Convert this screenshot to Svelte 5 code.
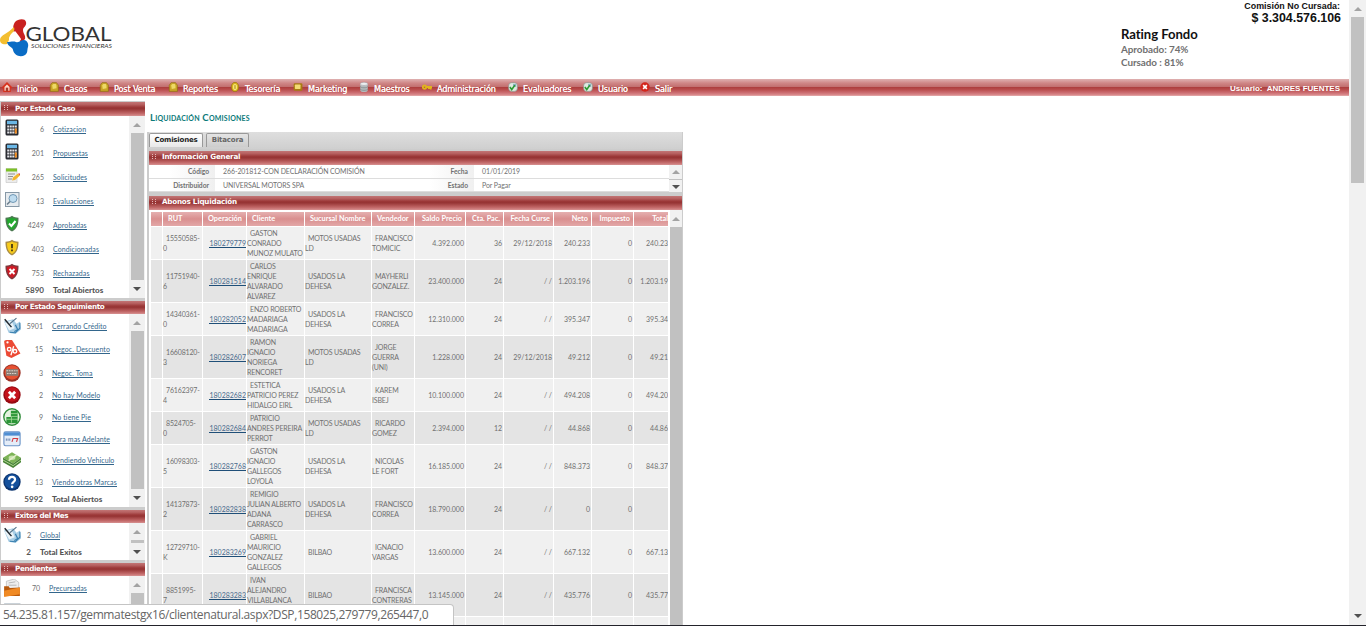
<script>
  const menu = [
    { t: 'Inicio', w: 47, i: 'home' },
    { t: 'Casos', w: 50, i: 'tag' },
    { t: 'Post Venta', w: 69, i: 'tag' },
    { t: 'Reportes', w: 62, i: 'tag' },
    { t: 'Tesorería', w: 63, i: 'coin' },
    { t: 'Marketing', w: 66, i: 'card' },
    { t: 'Maestros', w: 63, i: 'db' },
    { t: 'Administración', w: 86, i: 'key' },
    { t: 'Evaluadores', w: 75, i: 'check' },
    { t: 'Usuario', w: 57, i: 'check' },
    { t: 'Salir', w: 40, i: 'exit' },
  ];
  const panels = [
    {
      title: 'Por Estado Caso', h: 182, n: 43, thumb: 147, total: ['5890', 'Total Abiertos', 14], cls: 'caso',
      rows: [
        ['calc', '6', 'Cotizacion', 24], ['calc', '201', 'Propuestas', 24], ['note', '265', 'Solicitudes', 24],
        ['lens', '13', 'Evaluaciones', 24], ['ok', '4249', 'Aprobadas', 24], ['warn', '403', 'Condicionadas', 24],
        ['bad', '753', 'Rechazadas', 24],
      ],
    },
    {
      title: 'Por Estado Seguimiento', h: 193, n: 42, thumb: 158, total: ['5992', 'Total Abiertos', 14], cls: 'seg',
      rows: [
        ['pen', '5901', 'Cerrando Crédito', 23], ['pct', '15', 'Negoc. Descuento', 24], ['sign', '3', 'Negoc. Toma', 24],
        ['cross', '2', 'No hay Modelo', 20], ['green', '9', 'No tiene Pie', 23], ['cal', '42', 'Para mas Adelante', 21],
        ['money', '7', 'Vendiendo Vehiculo', 22], ['help', '13', 'Viendo otras Marcas', 22],
      ],
    },
    {
      title: 'Exitos del Mes', h: 37, n: 30, thumb: 3, total: ['2', 'Total Exitos', 14], cls: 'seg',
      rows: [['pen', '2', 'Global', 23]],
    },
    {
      title: 'Pendientes', h: 60, n: 39, thumb: 40, total: null, cls: 'seg',
      rows: [['folder', '70', 'Precursadas', 24], ['lens', '', '', 24]],
    },
  ];
  const heads = ['', 'RUT', 'Operación', 'Cliente', 'Sucursal Nombre', 'Vendedor', 'Saldo Precio', 'Cta. Pac.', 'Fecha Curse', 'Neto', 'Impuesto', 'Total'];
  const U = ['USADOS LA', 'DEHESA'];
  const M = ['MOTOS USADAS', 'LD'];
  const rows = [
    [33, ['15550585-', '0'], '180279779', ['GASTON', 'CONRADO', 'MUNOZ MULATO'], M, ['FRANCISCO', 'TOMICIC'], '4.392.000', '36', '29/12/2018', '240.233', '240.23'],
    [43, ['11751940-', '6'], '180281514', ['CARLOS', 'ENRIQUE', 'ALVARADO', 'ALVAREZ'], U, ['MAYHERLI', 'GONZALEZ.'], '23.400.000', '24', '/ /', '1.203.196', '1.203.19'],
    [33, ['14340361-', '0'], '180282052', ['ENZO ROBERTO', 'MADARIAGA', 'MADARIAGA'], U, ['FRANCISCO', 'CORREA'], '12.310.000', '24', '/ /', '395.347', '395.34'],
    [43, ['16608120-', '3'], '180282607', ['RAMON', 'IGNACIO', 'NORIEGA', 'RENCORET'], M, ['JORGE', 'GUERRA', '(UNI)'], '1.228.000', '24', '29/12/2018', '49.212', '49.21'],
    [33, ['76162397-', '4'], '180282682', ['ESTETICA', 'PATRICIO PEREZ', 'HIDALGO EIRL'], U, ['KAREM', 'ISBEJ'], '10.100.000', '24', '/ /', '494.208', '494.20'],
    [33, ['8524705-', '0'], '180282684', ['PATRICIO', 'ANDRES PEREIRA', 'PERROT'], M, ['RICARDO', 'GOMEZ'], '2.394.000', '12', '/ /', '44.868', '44.86'],
    [43, ['16098303-', '5'], '180282768', ['GASTON', 'IGNACIO', 'GALLEGOS', 'LOYOLA'], U, ['NICOLAS', 'LE FORT'], '16.185.000', '24', '/ /', '848.373', '848.37'],
    [43, ['14137873-', '2'], '180282838', ['REMIGIO', 'JULIAN ALBERTO', 'ADANA', 'CARRASCO'], U, ['FRANCISCO', 'CORREA'], '18.790.000', '24', '/ /', '0', ''],
    [43, ['12729710-', 'K'], '180283269', ['GABRIEL', 'MAURICIO', 'GONZALEZ', 'GALLEGOS'], ['BILBAO'], ['IGNACIO', 'VARGAS'], '13.600.000', '24', '/ /', '667.132', '667.13'],
    [43, ['8851995-', '7'], '180283283', ['IVAN', 'ALEJANDRO', 'VILLABLANCA', ''], ['BILBAO'], ['FRANCISCA', 'CONTRERAS'], '13.145.000', '24', '/ /', '435.776', '435.77'],
    [43, [''], '', [''], [''], [''], '', '', '', '', ''],
  ];
</script>

{#snippet icon(k)}
  <svg viewBox="0 0 16 16" class="ic">
    {#if k === 'home'}
      <path d="M0 8 8 0l8 8v2l-2-1v7H2V9l-2 1z" fill="#d8301c" /><path d="M4 8l4-4 4 4v6H4z" fill="#ffd9cb" /><path d="M6 9h4v6H6z" fill="#a83a2a" />
    {:else if k === 'tag'}
      <path d="M2 5 5 1h7l3 4v10H2z" fill="#c9a526" stroke="#8b6a10" /><path d="M5 5l2-2h4l1 3v4l-6 1z" fill="#edd965" />
    {:else if k === 'coin'}
      <ellipse cx="8" cy="8" rx="6" ry="7.5" fill="#d9b21c" stroke="#8b6a10" /><ellipse cx="8" cy="8" rx="3.4" ry="5" fill="#f5e676" /><path d="M8 5v6" stroke="#a57d10" stroke-width="1.500" />
    {:else if k === 'card'}
      <rect x="1" y="2" width="14" height="12" rx="2" fill="#a87b12" /><rect x="3" y="4" width="9" height="7" rx="1" fill="#f3db72" />
    {:else if k === 'db'}
      <path d="M2 3v10c0 4 12 4 12 0V3z" fill="#b4babc" /><ellipse cx="8" cy="3" rx="6" ry="2.5" fill="#eceff0" stroke="#889" stroke-width=".6" /><path d="M2 7c0 3 12 3 12 0M2 11c0 3 12 3 12 0" stroke="#777e80" fill="none" />
    {:else if k === 'key'}
      <circle cx="4" cy="8" r="2.700" fill="none" stroke="#e0b41b" stroke-width="3" /><path d="M7 8h9M14 8v4M11 8v3" stroke="#e0b41b" stroke-width="3" />
    {:else if k === 'check'}
      <rect x="1" y="1" width="14" height="14" rx="5" fill="#dfe9e0" stroke="#87928b" /><path d="M8 3h5v5H8z" fill="#8db5c5" /><path d="M3 8l3 4 5-7" stroke="#2d9c34" stroke-width="2.600" fill="none" />
    {:else if k === 'exit'}
      <circle cx="8" cy="8" r="7.5" fill="#d3261c" /><path d="M5 5l6 6M11 5l-6 6" stroke="#fff" stroke-width="2.6" />
    {:else if k === 'calc'}
      <rect x="1.5" y="0" width="13" height="16" rx="1.5" fill="#2a2c32" /><rect x="3" y="1.3" width="10" height="3.4" fill="#6bb7e6" />
      <path d="M3.2 7h9.6M3.2 10h9.6M3.2 13h9.6" stroke="#e4e4e8" stroke-width="2" stroke-dasharray="2 .55" /><path d="M10.8 9h2v5h-2z" fill="#f08b1d" />
    {:else if k === 'note'}
      <path d="M2 1h11v14H2z" fill="#ececec" stroke="#c2c2c2" stroke-width=".6" /><path d="M2 1h11v3H2z" fill="#7cc127" /><path d="M4 6.5h7M4 9h5M4 11.5h4" stroke="#909090" /><path d="M8 13l1-3 5-4 2 2-5 4.500z" fill="#f4b52c" /><path d="M14 6l2 2 .3-2z" fill="#d43b3b" />
    {:else if k === 'lens'}
      <rect x="1.500" y="1" width="13.500" height="14" fill="#e6ebef" stroke="#8798a6" /><circle cx="9" cy="7" r="4" fill="#bfdcef" stroke="#7198b4" /><path d="M6 10l-3 3" stroke="#6c7f8e" stroke-width="1.6" />
    {:else if k === 'ok' || k === 'warn' || k === 'bad'}
      <path d="M8 .3c2 1.500 4 1.900 6.500 2C14.600 9 13 13.500 8 16 3 13.500 1.400 9 1.500 2.300 4 2.200 6 1.800 8 .3z" fill={k === 'ok' ? '#4d7a52' : k === 'warn' ? '#a98c45' : '#7d3a3e'} />
      <path d="M8 2c1.500 1 3.300 1.400 5 1.500C13 9 11.700 12.400 8 14.400 4.300 12.400 3 9 3 3.500 4.700 3.400 6.500 3 8 2z" fill={k === 'ok' ? '#22a82d' : k === 'warn' ? '#f7cb1d' : '#cf1a24'} />
      {#if k === 'ok'}<path d="M5 8l2.400 2.500L11.500 5.500" stroke="#fff" stroke-width="2" fill="none" />
      {:else if k === 'warn'}<path d="M8 4.500v4.300M8 10v1.800" stroke="#463a12" stroke-width="1.800" />
      {:else}<path d="M5.500 5.500l5 5M10.500 5.500l-5 5" stroke="#fff" stroke-width="2" />{/if}
    {:else if k === 'pen'}
      <path d="M1 4l8-2 3 4 3-2 1 7-5 4-6-1z" fill="#a8cde4" /><path d="M1.500 5l6-2 3 7-5 2z" fill="#e9f3f8" /><path d="M6 13.500l5 .5 4-4 0-5M11 7l2 4-3 2" stroke="#3a80b0" fill="none" /><path d="M1.500 2l6 7" stroke="#20262c" stroke-width="1.300" /><path d="M6 6l6-5" stroke="#54748a" />
    {:else if k === 'pct'}
      <path d="M1 1.500Q1 0 3 0h5l7.500 12-8 4-4.500-2z" fill="#ec4a35" /><circle cx="4" cy="2.200" r="1" fill="#fff" /><circle cx="5.500" cy="8.200" r="1.600" fill="none" stroke="#fff" stroke-width="1.200" /><circle cx="10.600" cy="10" r="1.600" fill="none" stroke="#fff" stroke-width="1.200" /><path d="M9.500 5.500l-2.500 8" stroke="#fff" stroke-width="1.200" />
    {:else if k === 'sign'}
      <circle cx="8" cy="8" r="7.700" fill="#9b3024" /><circle cx="8" cy="7.500" r="6.500" fill="#e75132" /><path d="M2.500 4.500h11v6h-11z" fill="#8a7b73" /><path d="M3 6h10M3.500 8.500h9" stroke="#ddd0c6" stroke-width=".9" stroke-dasharray="1.500 .7" />
    {:else if k === 'cross'}
      <circle cx="8" cy="8" r="7.700" fill="#960a12" /><circle cx="8" cy="7.500" r="6.400" fill="#c5131b" /><path d="M5.200 5.200l5.600 5.600M10.800 5.200l-5.600 5.600" stroke="#fff" stroke-width="2.500" />
    {:else if k === 'green'}
      <circle cx="8" cy="8" r="7.300" fill="#e4f3df" stroke="#2f8b39" stroke-width="1.200" /><path d="M7 2.500h6V13.500H3V8h4z" fill="#2c9638" /><path d="M3 10h11M7 7.500h6M7 5h6M7.500 8v5" stroke="#a9dc9d" stroke-width=".7" />
    {:else if k === 'cal'}
      <rect x=".8" y="1.500" width="14.400" height="12.500" rx="1.500" fill="#e4edf8" stroke="#6c94c8" /><path d="M1 2h14v3H1z" fill="#4f8ed2" /><path d="M2.500 8.500h4.500" stroke="#7890b8" stroke-width="2" stroke-dasharray="1 .5" /><path d="M8 10.500l1-3h4l-1 3" stroke="#d33b42" stroke-width="1" fill="none" />
    {:else if k === 'money'}
      <path d="M0 6l8-5 8 5-7 5z" fill="#7cb356" /><path d="M0 6v4l9 5v-4zM16 6v4l-7 5v-4z" fill="#4a8438" /><path d="M0 8l9 5 7-5" stroke="#b8dc9c" fill="none" stroke-width=".8" /><ellipse cx="8" cy="6" rx="3" ry="2" fill="#c5e2ab" /><path d="M12 3.500l-7 5" stroke="#e4edc9" stroke-width="1.300" />
    {:else if k === 'help'}
      <circle cx="8" cy="8" r="7.700" fill="#0d3570" /><circle cx="8" cy="7.700" r="6.500" fill="#14509c" /><path d="M5.300 6c.2-3.500 5.600-3.200 5.400 0 0 2-2.600 1.800-2.600 4" stroke="#fff" stroke-width="2" fill="none" /><circle cx="8.100" cy="12.300" r="1.200" fill="#fff" />
    {:else if k === 'folder'}
      <path d="M3 2l7-2 4 3v6H3z" fill="#eee" stroke="#b5b5b5" stroke-width=".6" /><path d="M5 3.500l6-1M5 5.500h7" stroke="#aaa" stroke-width=".7" /><path d="M1 6.500h4l1 1.500 9-.5V15H1z" fill="#b9590c" /><path d="M1 10.500l14-3v6L1 16z" fill="#f08a24" />
    {/if}
  </svg>
{/snippet}

{#snippet arrow(up)}
  <svg class="ar" viewBox="0 0 8 4"><path d={up ? 'M0 4 4 0l4 4z' : 'M0 0h8L4 4z'} fill={up ? '#a3a3a3' : '#505050'} /></svg>
{/snippet}

{#snippet bar(title)}
  <div class="bar"><i class="grip"></i><b>{title}</b></div>
{/snippet}

{#snippet lines(a)}
  <div class="lines">{#each a as l}<div>{l}</div>{/each}</div>
{/snippet}

<div class="screen">
  <div class="page">
    <header>
      <svg class="logo" width="114" height="42" viewBox="0 0 114 42">
        <path d="M15 4c3-3 10-4 11 0 1 4-3 5-3 8 0 4 3 5 2 9l-4 4-5-8c-3-2-4-9-1-13z" fill="#c9211f" />
        <path d="M14 9c1 3 0 4-2 6-2 2-3 4-3 7l-2 4c-3 1-7 0-7-4 0-3 2-4 5-6 3-2 6-4 9-7z" fill="#f3be30" />
        <path d="M7 24c4 0 6-1 9 0 3 1 5-2 8-2 3 0 5 4 4 7-1 3 0 6-3 8-5 3-11 0-12-5 0-3-5-3-6-8z" fill="#0a6cc5" />
        <path d="M15 13c2 2 4 5 6 8 0 2-3 3-6 2-3 0-5 0-6-1 0-4 3-6 6-9z" fill="#fff" />
        <text x="25.500" y="23" textLength="86" lengthAdjust="spacingAndGlyphs" class="g">GLOBAL</text>
        <text x="31" y="29.500" textLength="81" lengthAdjust="spacingAndGlyphs" class="s">SOLUCIONES FINANCIERAS</text>
      </svg>
      <div class="rating"><strong>Rating Fondo</strong><span>Aprobado: 74%</span><span>Cursado : 81%</span></div>
      <div class="com"><span>Comisión No Cursada:</span><strong>$ 3.304.576.106</strong></div>
    </header>

    <nav>
      {#each menu as m}
        <a style="width:{m.w}px">{@render icon(m.i)}<span>{m.t}</span></a>
      {/each}
      <div class="user">Usuario:&nbsp; ANDRES FUENTES</div>
    </nav>

    <div class="main">
      <aside>
        {#each panels as p}
          <section>
            {@render bar(p.title)}
            <div class="list" style="height:{p.h}px">
              <div class="items {p.cls}">
                {#each p.rows as r}
                  <div class="it" style="height:{r[3]}px">
                    {@render icon(r[0])}
                    <span class="num" style="width:{p.n}px">{r[1]}</span>
                    {#if r[2]}<a class="lnk">{r[2]}</a>{/if}
                  </div>
                {/each}
                {#if p.total}
                  <div class="it tot" style="height:{p.total[2]}px"><span class="num" style="width:{p.n}px">{p.total[0]}</span><b>{p.total[1]}</b></div>
                {/if}
              </div>
              <div class="sb">{@render arrow(true)}<div class="thumb" style="height:{p.thumb}px"></div>{@render arrow(false)}</div>
            </div>
          </section>
        {/each}
      </aside>

      <main>
        <h1>Liquidación Comisiones</h1>
        <div class="frame">
          <div class="tabs"><span class="tab on">Comisiones</span><span class="tab">Bitacora</span></div>
          {@render bar('Información General')}
          <div class="info">
            <div class="fields">
              <b>Código</b><span>266-201812-CON DECLARACIÓN COMISIÓN</span><b>Fecha</b><span>01/01/2019</span>
              <b>Distribuidor</b><span>UNIVERSAL MOTORS SPA</span><b>Estado</b><span>Por Pagar</span>
            </div>
            <div class="sb">{@render arrow(true)}<div class="thumb" style="height:1px"></div>{@render arrow(false)}</div>
          </div>
          {@render bar('Abonos Liquidación')}
          <div class="data">
            <div class="grid">
              <div class="tr th">{#each heads as h, i}<div class:r={i > 5}>{h}</div>{/each}</div>
              {#each rows as r, i}
                <div class="tr" class:odd={i % 2} style="height:{r[0]}px">
                  <div></div>
                  <div>{@render lines(r[1])}</div>
                  <div class="r">{#if r[2]}<a class="op">{r[2]}</a>{/if}</div>
                  <div>{@render lines(r[3])}</div>
                  <div>{@render lines(r[4])}</div>
                  <div>{@render lines(r[5])}</div>
                  <div class="r">{r[6]}</div>
                  <div class="r">{r[7]}</div>
                  <div class="r">{r[8]}</div>
                  <div class="r">{r[9]}</div>
                  <div class="r">{r[2] ? '0' : ''}</div>
                  <div class="r">{r[10]}</div>
                </div>
              {/each}
            </div>
            <div class="sb">{@render arrow(true)}<div class="thumb" style="height:440px"></div></div>
          </div>
        </div>
      </main>
    </div>
  </div>
  <div class="vsb">{@render arrow(true)}<div class="thumb"></div>{@render arrow(false)}</div>
  <div class="status">54.235.81.157/gemmatestgx16/clientenatural.aspx?DSP,158025,279779,265447,0</div>
  <div class="edge"></div>
</div>

<style>
  :global(body) { background: #fff; overflow: hidden; }
  .screen { position: relative; display: flex; width: 1366px; height: 626px; overflow: hidden; font: 7px/10px Lato, sans-serif; color: #707070; }
  .screen * { box-sizing: border-box; }
  .page { width: 1349px; height: 626px; overflow: hidden; }
  header { display: flex; height: 79px; }
  .logo { margin-top: 18px; }
  .logo text { fill: #333; font-family: Lato, sans-serif; }
  .logo .g { font-size: 18.500px; }
  .logo .s { font-size: 5.400px; font-style: italic; }
  .rating { margin: 26px 0 0 1007px; width: 100px; display: flex; flex-direction: column; font: bold 9.900px/13px Lato, sans-serif; letter-spacing: -.05px; white-space: nowrap; }
  .rating strong { font: bold 13.100px/16px Lato, sans-serif; margin-bottom: 1px; color: #111; }
  .com { flex: 1; padding: 1px 9px 0 0; display: flex; flex-direction: column; align-items: flex-end; font: bold 8.900px/11px "Liberation Sans", sans-serif; color: #111; white-space: nowrap; }
  .com strong { font-size: 12.400px; line-height: 13px; margin-right: -1px; }

  nav { display: flex; height: 17px; padding-left: 2px; background: linear-gradient(#dfb1b1 0, #cf8585 25%, #c27070 45%, #ae3f3f 50%, #b94c4c 62%, #cb6c70 80%, #d98a8c 93%, #e5b0b0 100%); font: 8.200px/12px "DejaVu Sans", sans-serif; color: #fff; }
  nav a { display: flex; white-space: nowrap; }
  nav .ic { width: 10px; height: 10px; margin: 3px 5.500px 0 -.5px; flex: none; }
  nav span { margin-top: 4px; letter-spacing: -.17px; text-shadow: 0 0 .5px #fff; }
  .user { margin: 4px 9px 0 auto; font: bold 8px/11px "Liberation Sans", sans-serif; }

  .main { display: flex; height: 530px; }
  aside { width: 145px; margin-top: 5px; border-left: 1px solid #ccc; background: #ccc; }
  section { border-top: 1px solid #ccc; padding-bottom: 2px; }
  section:last-child { padding: 0; }
  .bar { display: flex; align-items: center; height: 14px; background: linear-gradient(#c27575 0, #b66060 18%, #9c3838 38%, #963434 48%, #b05252 68%, #c66e6e 85%, #d79292 100%); color: #fff; font: bold 7.200px/12px "DejaVu Sans", sans-serif; white-space: nowrap; }
  aside section + section .bar { height: 13px; }
  .bar b { letter-spacing: -.23px; margin-bottom: 2px; }
  aside .bar b { letter-spacing: -.37px; margin-bottom: 1px; }
  .grip { width: 5px; height: 6px; margin: 0 5px 2px 3px; background: repeating-linear-gradient(90deg, #e4b8b8 0 1px, transparent 1px 3px); -webkit-mask: repeating-linear-gradient(#000 0 1px, transparent 1px 2px); }
  aside .grip { margin-right: 6px; }
  .list { display: flex; background: #fff; overflow: hidden; }
  .items { width: 128px; }
  .it { display: flex; align-items: center; position: relative; padding-top: 1px; }
  .seg .it { padding: 0; }
  .it .ic { width: 16px; height: 17px; margin: 0 -19px 3px 3px; flex: none; }
  .seg .ic { width: 18px; height: 18px; margin: 0 -19.500px 0 1.500px; }
  .num { text-align: right; margin-right: 9px; flex: none; }
  .lnk { color: #33668c; border-bottom: 1px solid #33668c; letter-spacing: .09px; line-height: 8px; margin-top: 1px; white-space: nowrap; }
  .tot, .seg .tot { padding: 0 0 2px; font-size: 8.050px; font-weight: bold; color: #555; }
  .sb { width: 16px; background: #f1f1f1; display: flex; flex-direction: column; align-items: center; flex: none; }
  .ar { width: 8px; height: 4px; margin: 7px 0 6px; flex: none; }
  .thumb { width: 13px; background: #c1c1c1; flex: none; }

  main { margin: 0 0 0 2px; width: 536px; }
  h1 { margin: 16px 0 8px 3px; height: 12px; font: bold small-caps 9.600px/12px Lato, sans-serif; letter-spacing: .2px; color: #0b7a7a; white-space: nowrap; }
  .frame { border-left: 2px solid #ccc; border-right: 1px solid #ccc; background: #ccc; }
  .tabs { display: flex; align-items: flex-end; height: 17px; margin-bottom: 2px; padding-bottom: 2px; background: linear-gradient(#dedede, #cfcfcf); }
  .tab { height: 14px; width: 54px; margin-right: 3px; border: 1px solid #999; border-bottom: 0; border-radius: 2px 2px 0 0; background: linear-gradient(#e4e4e4, #cdcdcd); font: bold 7px/12px "DejaVu Sans", sans-serif; letter-spacing: -.18px; text-align: center; color: #666; }
  .tab.on { background: linear-gradient(#fff, #e8e8e8); color: #222; }
  .tab:last-child { width: 43px; }
  .info { display: flex; height: 27px; margin-bottom: 4px; background: #fff; overflow: hidden; }
  .info .ar { margin: 5px 0 5px; }
  .info .sb { width: 13px; }
  .fields { flex: 1; display: grid; grid-template: 14px 13px / 66px 195px 64px 1fr; font-size: 6.950px; line-height: 12px; letter-spacing: -.06px; white-space: nowrap; }
  .fields b { text-align: right; padding-right: 6px; font-size: 6.700px; letter-spacing: 0; background: linear-gradient(90deg, #fff 30%, #f0f0f0); }
  .fields span { padding-left: 8px; }
  .fields > * { border-bottom: 1px solid #ddd; }
  .data { display: flex; height: 420px; background: #fff; overflow: hidden; }
  .data .sb { width: 12px; margin-left: auto; }
  .grid { width: 519px; overflow: hidden; padding: 2px 0 0 2px; }
  .tr { display: grid; grid-template-columns: 12px 40px 44px 58px 67px 43px 51px 38px 50px 38px 42px 34px; background: #f0f0f0; border-bottom: 1px solid #fff; white-space: nowrap; }
  .tr > div { display: flex; align-items: center; border-right: 1px solid #fff; min-width: 0; }
  .tr > .r { justify-content: flex-end; padding-right: 1px; }
  .tr > div:last-child { border: 0; padding-right: 0; }
  .odd { background: #e4e4e4; }
  .th { height: 15px; background: linear-gradient(#e5b0b0, #d98f8f 50%, #e3a8a8); color: #fff; font: bold 7.300px/12px Lato, sans-serif; }
  .th > div { padding-left: 5px; }
  .th > .r { padding: 0 3px 0 0; }
  .lines { letter-spacing: -.15px; }
  .lines div { height: 10px; }
  .lines div:first-child { padding-left: 3px; }
  .op { color: #4a6a8c; border-bottom: 1px solid #1f4f78; line-height: 8px; margin-right: -1px; }

  .vsb { width: 17px; background: #f1f1f1; display: flex; flex-direction: column; align-items: center; }
  .vsb .thumb { height: 166px; }
  .vsb .ar:last-child { margin: auto 0 8px; }
  .status { position: absolute; left: 0; top: 604px; width: 454px; height: 22px; padding-left: 3px; background: #fff; border: 1px solid #c4c4c4; border-left: 0; border-radius: 0 4px 0 0; font: 12px/20px "Open Sans", sans-serif; letter-spacing: -.38px; color: #666; white-space: nowrap; }
  .edge { position: absolute; left: 0; right: 0; bottom: 0; height: 1px; background: #23232b; }
</style>
